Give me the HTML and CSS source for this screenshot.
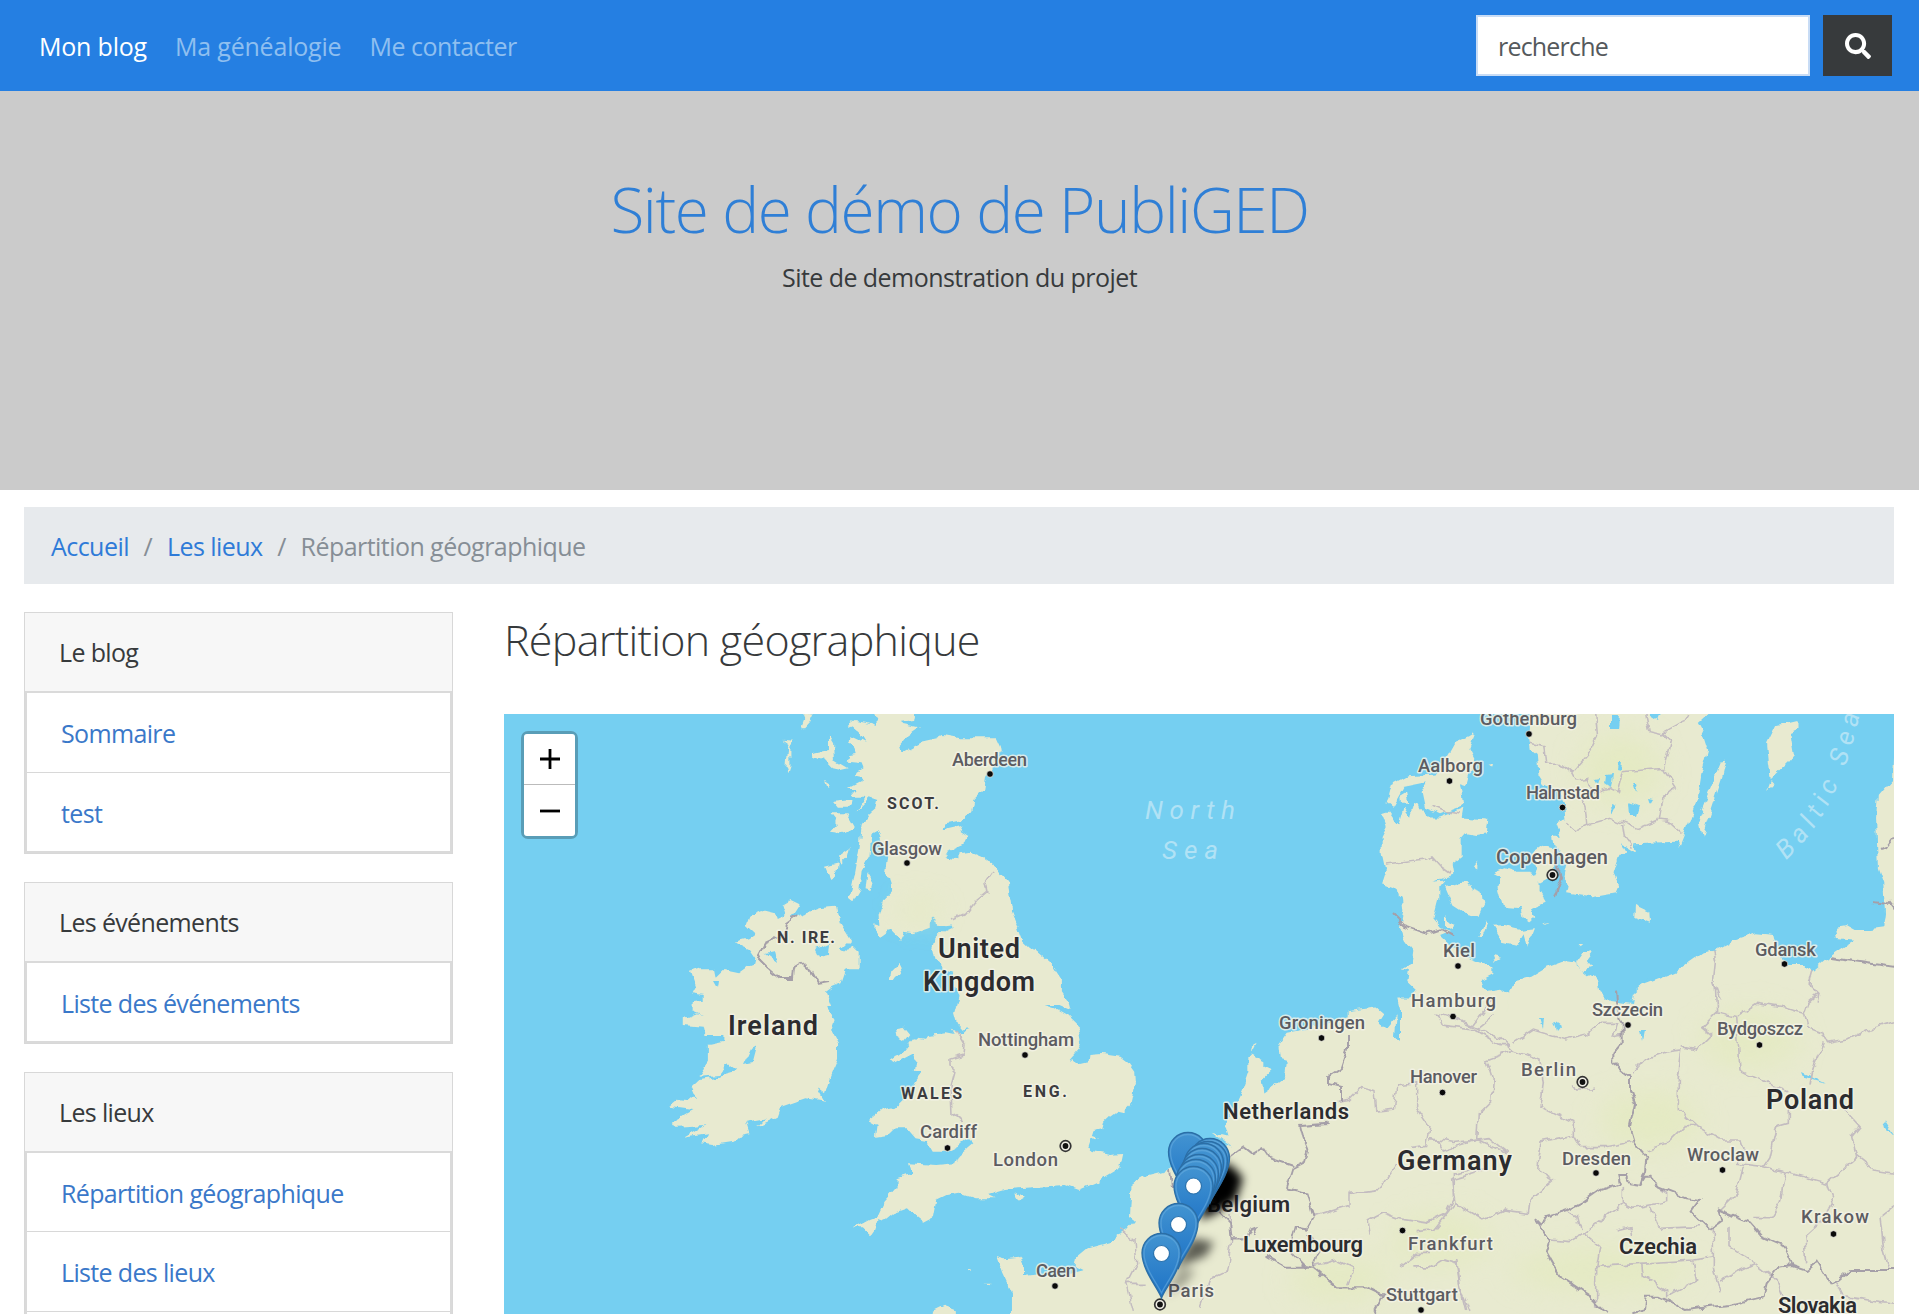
FILE: index.html
```html
<!DOCTYPE html>
<html lang="fr">
<head>
<meta charset="utf-8">
<title>Site de démo de PubliGED</title>
<link rel="stylesheet" href="styles.css">
</head>
<body>
<div class="page">
<nav class="navbar">
  <a class="nav-link active" href="#">Mon blog</a>
  <a class="nav-link" href="#">Ma généalogie</a>
  <a class="nav-link contact" href="#">Me contacter</a>
  <form class="search">
    <input class="search-input" type="text" placeholder="recherche">
    <button class="search-btn" type="button" aria-label="Rechercher">
      <svg viewBox="0 0 512 512" width="26" height="26"><path fill="#fff" d="M505 442.700L405.300 343c-4.500-4.500-10.600-7-17-7H372c27.600-35.300 44-79.700 44-128C416 93.100 322.900 0 208 0S0 93.100 0 208s93.100 208 208 208c48.300 0 92.700-16.400 128-44v16.300c0 6.400 2.500 12.500 7 17l99.700 99.700c9.400 9.400 24.600 9.400 33.900 0l28.300-28.300c9.400-9.400 9.400-24.600.1-34zM208 336c-70.700 0-128-57.200-128-128 0-70.700 57.200-128 128-128 70.700 0 128 57.200 128 128 0 70.700-57.200 128-128 128z"/></svg>
    </button>
  </form>
</nav>
<header class="hero">
  <h1>Site de démo de PubliGED</h1>
  <p>Site de demonstration du projet</p>
</header>
<ol class="breadcrumb">
  <li><a href="#">Accueil</a></li>
  <li class="sep">/</li>
  <li><a href="#">Les lieux</a></li>
  <li class="sep">/</li>
  <li class="current">Répartition géographique</li>
</ol>
<div class="content">
  <aside class="sidebar">
    <section class="card">
      <div class="card-header">Le blog</div>
      <ul><li><a href="#">Sommaire</a></li><li><a href="#">test</a></li></ul>
    </section>
    <section class="card">
      <div class="card-header">Les événements</div>
      <ul><li><a href="#">Liste des événements</a></li></ul>
    </section>
    <section class="card">
      <div class="card-header">Les lieux</div>
      <ul><li><a href="#">Répartition géographique</a></li><li><a href="#">Liste des lieux</a></li><li></li></ul>
    </section>
  </aside>
  <main class="main">
    <h2>Répartition géographique</h2>
    <div class="map">
      <svg class="map-svg" viewBox="504 714 1390 600" width="1390" height="600">
        <defs>
          <filter id="coast" x="0" y="0" width="1" height="1">
            <feTurbulence type="fractalNoise" baseFrequency="0.09" numOctaves="2" seed="4" result="n"/>
            <feDisplacementMap in="SourceGraphic" in2="n" scale="8" xChannelSelector="R" yChannelSelector="G"/>
          </filter>
          <filter id="soft" x="-1" y="-1" width="3" height="3"><feGaussianBlur stdDeviation="5"/></filter>
          <filter id="wide" x="-1" y="-1" width="3" height="3"><feGaussianBlur stdDeviation="14"/></filter>
          <linearGradient id="pinfill" x1="0" y1="0" x2="0" y2="1"><stop offset="0" stop-color="#4394d1"/><stop offset="1" stop-color="#1d72c6"/></linearGradient>
          <g id="pin"><path d="M0 45C-3 36-19.500 17-19.500 0A19.500 19.500 0 0 1 19.500 0C19.500 17 3 36 0 45Z" fill="url(#pinfill)" stroke="#2b6ea6" stroke-width="1.300"/><path d="M0 40C-4 31-17.500 15-17.500 0A17.500 17.500 0 0 1 17.500 0C17.500 15 4 31 0 40Z" fill="none" stroke="#6cafe0" stroke-opacity=".55" stroke-width="1.300"/></g>
          <g id="hole"><circle r="8" fill="#fff" stroke="#2b73ae" stroke-width="1.200"/></g>
          <g id="capital"><circle r="5.300" fill="#f3f1e8" stroke="#333" stroke-width="1.700"/><circle r="2.900" fill="#111"/></g>
        </defs>
        <rect x="504" y="714" width="1390" height="600" fill="#74cff1"/>
        <g filter="url(#coast)">
          <rect x="500" y="710" width="1398" height="608" fill="#74cff1"/>
          <g fill="#e8ead0">
            <!-- Scotland -->
            <g transform="translate(480 600) scale(.39542 .33333)">
              <path d="M985 325L1003 358 1003 375 975 365 950 360 932 375 945 385 960 400 975 428 945 412 932 405 930 430 945 440 950 462 935 465 930 485 965 490 970 505 955 515 950 530 968 535 965 545 925 570 950 570 935 590 975 590 950 635 985 592 1005 600 1000 625 985 640 965 680 960 740 945 840 935 890 945 900 960 870 965 810 985 770 990 700 1005 690 1015 720 1030 765 1023 830 1040 835 1045 870 1020 900 1008 950 1010 975 995 970 995 985 1012 1010 1035 990 1060 1020 1070 995 1095 1000 1140 980 1140 955 1160 975 1195 970 1362 980 1345 930 1335 850 1295 790 1270 770 1240 755 1215 760 1215 775 1175 770 1185 750 1225 730 1235 705 1215 690 1220 675 1165 690 1180 670 1220 660 1245 630 1250 600 1275 570 1280 530 1300 490 1317 455 1315 440 1305 415 1215 415 1170 405 1155 415 1115 425 1070 455 1060 440 1080 410 1110 385 1070 375 1065 365 1100 360 1105 325Z"/>
              <path d="M815 345L840 350 835 365 820 385 812 385 820 360ZM765 422L792 425 785 440 785 500 780 520 775 500 780 435ZM880 405L893 430 895 480 930 505 910 510 890 505 870 480 840 470 840 460 880 450ZM870 540L883 550 877 562ZM885 640L925 640 945 680 915 700 885 695 905 670ZM895 605L940 600 930 620 905 620ZM870 800L905 790 900 830 885 840ZM905 770L935 745 930 770 910 795ZM980 820L995 850 990 870 975 865Z"/>
            </g>
            <!-- England, Wales, Ireland and western France -->
            <g transform="translate(640 880) scale(.3444 .33333)">
              <path d="M1065 5L890 80 905 140 885 150 855 180 848 205 855 240 880 265 910 275 900 290 915 320 925 350 912 400 920 430 935 448 960 445 930 460 905 445 915 465 890 460 830 465 825 480 795 475 760 520 725 545 740 550 795 520 800 540 795 575 815 580 800 600 780 640 740 680 700 690 665 720 690 735 685 770 720 765 740 745 775 745 800 775 830 780 850 815 885 815 925 795 950 775 965 790 925 825 915 850 860 855 780 850 790 880 745 895 745 925 710 965 690 1010 665 1020 620 1045 650 1045 670 1065 680 1050 690 1020 705 1025 735 1000 775 985 790 1000 825 1028 850 1015 860 960 890 945 925 938 975 955 1030 955 1010 945 1060 930 1100 925 1160 920 1235 915 1275 930 1330 905 1355 885 1395 860 1403 822 1365 825 1310 815 1302 800 1310 775 1330 770 1315 765 1320 750 1345 745 1350 725 1365 710 1385 695 1405 700 1425 680 1440 610 1438 575 1420 550 1395 530 1340 522 1305 525 1302 550 1280 555 1255 535 1245 540 1270 510 1282 480 1275 440 1240 405 1205 385 1175 375 1215 375 1250 390 1245 370 1225 340 1225 300 1190 245 1150 210 1130 205 1110 185 1090 130 1080 95Z"/>
              <path d="M725 300L730 275 755 248 763 265 740 300ZM740 445L765 440 785 465 770 485 745 470ZM1090 945L1110 940 1120 950 1100 962Z"/>
              <path d="M85 680L115 655 165 660 150 625 175 600 230 590 285 575 255 550 230 585 170 590 200 545 200 495 245 485 245 465 190 465 185 440 130 435 130 415 165 400 185 405 150 390 150 370 185 365 185 345 150 340 160 320 145 275 175 265 215 265 220 290 240 270 285 280 305 265 330 255 335 235 315 205 275 185 315 175 335 160 310 135 320 105 355 90 395 100 400 120 420 110 410 75 435 60 465 75 440 115 480 100 520 85 570 80 580 130 610 180 580 210 600 215 615 195 635 215 635 265 600 265 585 310 560 320 540 335 555 375 540 380 565 420 555 450 575 490 575 540 555 590 540 640 515 620 540 665 480 655 410 680 400 710 340 740 365 715 305 725 315 760 290 765 270 785 210 795 180 790 195 760 130 770 190 735 105 740 95 725 155 690Z"/>
              <path d="M1035 1128L1060 1135 1105 1130 1115 1160 1115 1185 1160 1180 1190 1195 1285 1170 1265 1160 1270 1130 1300 1105 1370 1085 1410 1060 1450 1040 1450 1320 1080 1320 1080 1240 1055 1185ZM850 1295L880 1280 920 1295 920 1310 850 1310ZM1000 1208L1018 1208 1015 1213ZM955 1166L965 1168 960 1171Z"/>
            </g>
            <!-- Continental coast from the Channel to Jutland -->
            <g transform="translate(1120 700) scale(.33333 .39158)">
              <path d="M-10 1365L20 1355 45 1330 30 1320 35 1235 75 1215 145 1200 240 1150 300 1130 330 1140 275 1105 320 1115 310 1085 340 1045 365 1000 385 950 385 915 395 905 430 920 430 935 455 945 425 970 430 1005 495 965 500 925 480 920 475 880 500 850 560 840 680 810 680 795 770 785 790 800 775 820 800 835 830 805 825 860 840 870 840 790 832 760 870 760 890 740 865 720 870 690 845 685 875 670 880 640 850 605 840 580 850 540 845 500 815 480 780 470 795 430 785 390 785 350 800 325 785 290 805 285 825 310 835 320 850 275 870 300 880 260 900 265 915 300 960 300 1030 275 1025 300 1105 305 1100 340 1070 345 1040 340 1025 355 1025 400 995 420 1000 445 940 465 975 460 955 480 955 510 940 560 960 580 990 590 960 600 1010 640 1050 660 1080 670 1120 680 1120 700 1085 715 1100 745 1140 740 1170 755 1190 715 1240 710 1300 690 1300 1600 -10 1600Z"/>
              <path d="M800 265L815 215 860 195 950 190 985 140 1005 110 1045 95 1062 86 1045 125 1060 150 1040 215 1020 210 1030 270 960 292 915 275 905 235 920 210 850 222 815 275ZM838 245L858 235 865 265 840 265ZM975 475L1040 465 1055 480 1085 490 1090 525 1075 555 1045 550 1000 525ZM1075 605L1098 560 1102 570 1085 605ZM395 900L400 880 410 875ZM975 555L1000 575 995 588 975 575ZM1105 163L1122 160 1120 167ZM1062 425L1072 415 1072 430Z"/>
            </g>
            <!-- Baltic coasts -->
            <g transform="translate(1360 700) scale(.35714 .33333)">
              <path d="M415 880L440 840 480 830 520 805 570 785 600 790 640 825 665 840 670 875 700 885 760 875 780 860 880 820 960 760 990 755 1050 720 1110 700 1160 705 1165 730 1190 795 1250 795 1265 815 1310 775 1350 745 1380 725 1335 720 1330 680 1360 675 1385 690 1430 690 1465 685 1470 640 1465 545 1450 500 1445 350 1450 290 1490 240 1493 160 1520 160 1520 950 415 950Z"/>
              <path d="M478 30L474 120 478 150 495 165 500 225 515 250 550 270 575 320 578 360 550 370 565 410 540 410 545 440 580 480 570 530 585 550 580 580 650 592 715 580 725 555 710 520 725 470 740 450 730 430 770 455 765 430 890 425 895 440 910 400 930 340 945 300 955 230 965 190 975 150 960 100 945 70 985 30Z"/>
              <path d="M375 520L410 505 440 515 470 515 490 530 500 510 480 460 510 437 540 445 545 520 500 545 500 570 520 605 475 625 488 655 475 665 455 650 450 625 400 620 385 560 395 530ZM375 680L400 678 450 690 490 685 470 740 460 700 440 735 400 725ZM770 615L810 635 812 665 768 648ZM1140 130L1165 75 1225 60 1225 90 1205 100 1215 165 1195 190 1150 235 1145 190ZM1150 240L1158 250 1140 270ZM1010 185L1025 182 1015 230 960 410 948 350 990 240ZM605 790L625 760 655 752 635 780 650 800 620 810ZM375 765L395 770 380 780ZM510 670L530 666 520 674ZM612 735L625 735 618 742Z"/>
            </g>
            <rect x="1400" y="1012" width="500" height="310"/>
          </g>
          <!-- Pasture tints -->
          <g fill="#e2eabb" opacity=".6" filter="url(#wide)">
            <ellipse cx="1620" cy="770" rx="42" ry="35"/><ellipse cx="1440" cy="1240" rx="50" ry="26"/><ellipse cx="1650" cy="1120" rx="50" ry="30"/><ellipse cx="1600" cy="1270" rx="90" ry="22"/><ellipse cx="1340" cy="1280" rx="50" ry="22"/><ellipse cx="1750" cy="1040" rx="50" ry="28"/><ellipse cx="920" cy="910" rx="20" ry="10"/>
          </g>
          <!-- Lakes and lagoons -->
          <g fill="#74cff1">
            <path d="M1597 978L1650 978 1634 993 1632 1004 1610 1001 1600 991ZM816 949L830 943 829 955 820 957ZM765 954L775 952 778 964ZM750 1050L757 1046 753 1061 744 1063ZM714 981L719 981 718 988ZM1611 716L1619 716 1618 729 1611 729ZM1606 776L1613 775 1611 788 1605 784ZM1629 803L1640 807 1637 817 1630 815ZM1618 762L1622 762 1621 771 1617 770ZM1633 782L1639 784 1636 792ZM1648 798L1653 799 1650 804ZM1595 779L1600 778 1598 784ZM1611 804L1616 806 1612 815ZM1648 714L1662 714 1659 721ZM1540 1018L1544 1018 1543 1028ZM1553 1021L1560 1026 1556 1031ZM1641 1030L1645 1030 1643 1040ZM1803 1072L1826 1083 1805 1077ZM1884 1119L1895 1136 1886 1127Z"/>
          </g>
          <!-- Regional limits -->
          <g fill="none" stroke="#c3bcc0" stroke-width="1.600">
            <path d="M993 870L985 882 987 892 976 901 966 914 953 920M956 1030L965 1045 964 1054 950 1058 950 1067 955 1072 951 1087 952 1115 962 1122M1386 864L1402 862 1425 859 1432 857 1440 866 1450 873M1432 806L1444 811 1459 814"/>
            <g transform="translate(1120 700) scale(.33333 .39158)" stroke-width="4.400">
              <path d="M650 1025L690 1020 725 990 765 1000 770 1050 820 1045 830 985 890 980 890 1040 930 1090 920 1140 870 1145M930 1120L1000 1130 1110 1120 1160 1155M750 1365L745 1330 790 1310 840 1325 920 1335 980 1310 1000 1270 1000 1210 1050 1200M780 1250L690 1260 690 1290 580 1320M780 1250L830 1190M330 1310L335 1380 320 1460 270 1480 240 1550M0 1350L45 1380 50 1440 20 1490 80 1490M580 1445L650 1430 700 1450 680 1490M20 1490L40 1560M970 1430L1010 1440 1020 1500 1050 1560M880 1450L930 1450 970 1430M1120 760L1060 830 950 800 965 830 1060 840 1140 880 1170 880"/>
            </g>
            <g transform="translate(1360 700) scale(.35714 .33333)" stroke-width="4.400">
              <path d="M660 42L665 110 640 165 595 220 560 190 520 190 515 140 475 130M595 220L605 240 640 235 650 280 700 265 720 275 735 215 850 205 870 120 850 100 900 70 915 42M850 205L885 265 845 300 835 360 780 385 700 355 635 375 600 395 575 370M635 375L630 320 615 280M735 375L740 410 760 440M835 360L870 365 905 400M800 42L810 95 850 105M988 755L995 790 990 840 1010 900M1265 810L1255 850 1285 880 1280 905"/>
            </g>
            <g transform="translate(1400 980) scale(.33333)" stroke-width="4.800">
              <path d="M165 115L230 145 300 170 340 210 260 240 280 300 275 360 235 400 230 480 130 510 115 480 90 480M230 145L280 105M340 190L400 150 500 180 560 165 600 130 650 130 640 165 665 160M340 210L420 240 430 310 420 380 520 430 520 465 420 485 410 570 460 600 390 660 385 700 310 690 250 720 165 670 100 750 50 755M165 670L155 600 260 570M235 480L320 520M520 465L540 500 620 500 700 485M695 280L730 240 800 215 845 210 835 290 835 390 890 440 960 480 1020 480 1030 510 1010 550 1090 560 1110 530 1130 440 1165 430 1165 390M845 200L890 210 935 165 905 140 950 95 945 0M950 95L1010 110 1070 70 1160 85 1210 100 1220 140 1270 160 1285 190 1340 180 1400 150 1482 125M1210 100L1220 70 1255 40 1225 0M1010 110L1020 270 1100 310 1165 335M1270 190L1240 260 1230 320M1335 390L1380 440 1355 470 1370 530 1280 610 1155 575 1090 560M1370 530L1420 570 1482 580M1280 610L1300 670 1280 710 1215 770 1220 850M1155 575L1140 670 1115 710 1060 710M1030 560L1010 640 960 690M740 510L800 490 850 440 890 440M670 620L670 670 700 685 800 665 800 640 760 610M670 670L550 760 600 800 590 860 720 850 880 840 940 830M500 690L530 710 540 750M450 780L510 785 550 760M590 860L590 980M725 850L730 890 800 930 800 955M880 845L890 900 800 950M750 680L780 745 900 740M940 745L940 860 960 940M990 740L990 800 1065 850 1130 900M1065 850L960 900M1440 710L1450 800 1470 870M1445 710L1482 680M650 750L690 740 695 770M1130 900L1150 950M1310 910L1330 950 1482 970M0 860L50 820 90 820M170 840L180 910 200 990M520 310L530 330 580 330 590 320"/>
            </g>
          </g>
          <!-- State borders -->
          <g fill="none" stroke="#a59fa8" stroke-width="2">
            <path d="M797 916L786 924 783 935 766 943 758 958 767 967 780 978 792 978 793 966 801 961 810 969 818 984 829 982M1392 914L1404 926 1427 934 1442 929 1453 935M1555 863L1561 878 1554 898M1347 1036L1347 1050 1341 1068 1329 1076 1329 1083 1341 1086 1341 1101M1880 850L1887 847 1898 833M1873 902L1887 904 1890 901 1897 910M1830 958L1896 967"/>
            <g transform="translate(1120 700) scale(.33333 .39158)" stroke-width="5.400">
              <path d="M620 1080L540 1085 550 1120 565 1150 555 1180 520 1195 500 1250 560 1260 580 1320 560 1350 530 1345 510 1410 550 1445 580 1450 600 1400 560 1360M330 1165L370 1140 400 1160 430 1145 450 1170 520 1190M150 1200L155 1240 200 1250M290 1300L330 1335 335 1375 385 1375M385 1370L395 1350 410 1345 400 1370M440 1420L500 1450 580 1450 650 1500 740 1500 790 1520 760 1568"/>
            </g>
            <g transform="translate(1400 980) scale(.33333)" stroke-width="6">
              <path d="M645 35L650 85 665 130 665 190 640 220 640 250 690 290 690 330 705 370 690 440 705 490 740 530 735 570 720 615 690 610 680 585 655 585 660 610 600 630 550 665 500 690 440 710 425 735 405 715 450 785 440 820 480 890 570 950 620 1000M720 615L735 590 755 590 770 620 860 655 900 660 875 695 930 750 965 725 955 690 1050 730 1080 765 1150 795 1175 855 1220 870 1250 845 1290 910 1310 905 1350 870 1482 870M1175 855L1140 860 1100 910 1090 950 990 975 930 980 860 990 780 950 740 950 735 990 700 1000"/>
            </g>
          </g>
        </g>
        <g class="town">
          <text x="952" y="766" textLength="75">Aberdeen</text><text x="872" y="855" textLength="70">Glasgow</text><text x="978" y="1046" textLength="96">Nottingham</text><text x="920" y="1138" textLength="57">Cardiff</text><text x="993" y="1166" textLength="65">London</text><text x="1036" y="1277" textLength="40">Caen</text><text x="1480" y="725" textLength="97">Gothenburg</text><text x="1418" y="772" textLength="65">Aalborg</text><text x="1526" y="799" textLength="74">Halmstad</text><text class="big" x="1496" y="864" textLength="112">Copenhagen</text><text x="1443" y="957" textLength="32">Kiel</text><text x="1755" y="956" textLength="61">Gdansk</text><text x="1411" y="1007" textLength="85">Hamburg</text><text x="1592" y="1016" textLength="71">Szczecin</text><text x="1717" y="1035" textLength="86">Bydgoszcz</text><text x="1521" y="1076" textLength="55">Berlin</text><text x="1410" y="1083" textLength="67">Hanover</text><text x="1562" y="1165" textLength="69">Dresden</text><text x="1687" y="1161" textLength="72">Wroclaw</text><text x="1801" y="1223" textLength="68">Krakow</text><text x="1408" y="1250" textLength="85">Frankfurt</text><text x="1386" y="1301" textLength="72">Stuttgart</text><text x="1279" y="1029" textLength="86">Groningen</text><text x="1168" y="1297" textLength="46">Paris</text>
        </g>
        <g class="region">
          <text x="887" y="809" textLength="52">SCOT.</text><text x="777" y="943" textLength="58">N. IRE.</text><text x="901" y="1099" textLength="61">WALES</text><text x="1023" y="1097" textLength="44">ENG.</text>
        </g>
        <g class="country">
          <text x="938" y="958" textLength="82">United</text><text x="923" y="991" textLength="112">Kingdom</text><text x="728" y="1035" textLength="90">Ireland</text><text x="1766" y="1109" textLength="88">Poland</text><text x="1397" y="1170" textLength="115">Germany</text>
          <g class="small"><text x="1223" y="1119" textLength="126">Netherlands</text><text x="1207" y="1212" textLength="83">Belgium</text><text x="1243" y="1252" textLength="120">Luxembourg</text><text x="1619" y="1254" textLength="78">Czechia</text><text x="1778" y="1313" textLength="79">Slovakia</text></g>
        </g>
        <g class="water">
          <text x="1145" y="819" textLength="90">North</text><text x="1162" y="859" textLength="56">Sea</text>
          <path id="baltic" d="M1786 860Q1846 806 1864 690" fill="none"/>
          <text><textPath href="#baltic" textLength="166">Baltic Sea</textPath></text>
        </g>
        <g class="dots">
          <circle cx="990" cy="774" r="3.300"/><circle cx="907" cy="863" r="3.300"/><circle cx="1025" cy="1055" r="3.300"/><circle cx="947.500" cy="1148" r="3.300"/><circle cx="1055" cy="1286" r="3.300"/><circle cx="1529" cy="734" r="3.300"/><circle cx="1449.500" cy="781" r="3.300"/><circle cx="1562.500" cy="807.500" r="3.300"/><circle cx="1458" cy="966" r="3.300"/><circle cx="1784.500" cy="964" r="3.300"/><circle cx="1453" cy="1016.500" r="3.300"/><circle cx="1628" cy="1025" r="3.300"/><circle cx="1759.500" cy="1045" r="3.300"/><circle cx="1442.500" cy="1092.500" r="3.300"/><circle cx="1596" cy="1173" r="3.300"/><circle cx="1722.500" cy="1170" r="3.300"/><circle cx="1833.500" cy="1234" r="3.300"/><circle cx="1402.500" cy="1230.500" r="3.300"/><circle cx="1421" cy="1310" r="3.300"/><circle cx="1321.500" cy="1038" r="3.300"/>
        </g>
        <use href="#capital" x="1065.500" y="1146"/><use href="#capital" x="1552.500" y="875"/><use href="#capital" x="1582.500" y="1082"/><use href="#capital" x="1160" y="1304.500"/>
        <g filter="url(#soft)"><path d="M1200 1220L1214 1160 1232 1166 1243 1178 1236 1200 1214 1214Z" fill="#000"/><path d="M1175 1268L1192 1238 1214 1242 1206 1256Z" fill="#000" opacity=".6"/><path d="M1164 1296L1180 1268 1196 1270 1186 1284Z" fill="#000" opacity=".3"/></g>
        <use href="#pin" x="1188" y="1152"/><use href="#pin" x="1210" y="1158"/><use href="#pin" x="1208" y="1161"/><use href="#pin" x="1204" y="1163"/><use href="#pin" x="1202" y="1168"/><use href="#pin" x="1199" y="1174"/><use href="#pin" x="1196" y="1179"/><use href="#pin" x="1193.500" y="1186"/><use href="#hole" x="1193.500" y="1186"/>
        <use href="#pin" x="1178.500" y="1223"/><use href="#hole" x="1178.500" y="1224.500"/>
        <use href="#pin" x="1161.500" y="1253"/><use href="#hole" x="1161.500" y="1253.500"/>
      </svg>
      <div class="zoom"><button type="button" aria-label="Zoom avant"><svg width="20" height="20" viewBox="0 0 20 20"><path d="M10 0V20M0 10H20" stroke="#000" stroke-width="2.800"/></svg></button><button type="button" aria-label="Zoom arrière"><svg width="20" height="20" viewBox="0 0 20 20"><path d="M0 10H20" stroke="#000" stroke-width="2.800"/></svg></button></div>
    </div>
  </main>
</div>
</div>
</body>
</html>
```
FILE: styles.css
```css
* { box-sizing: border-box; }
html { background: #fff; }
body {
  margin: 0;
  height: 1314px;
  overflow: hidden;
  font-family: "Open Sans", "Noto Sans", sans-serif;
  font-size: 25px;
  line-height: 38px;
  letter-spacing: -0.55px;
  color: #373a3c;
}
.page { width: 1919px; height: 1314px; overflow: hidden; }
a { color: #3a78c9; text-decoration: none; }

.navbar {
  display: flex;
  align-items: center;
  height: 91px;
  padding: 0 27px 0 39px;
  background: #257fe2;
}
.nav-link { color: #8fbff0; margin-right: 28px; padding-top: 1px; letter-spacing: -0.2px; }
.nav-link.active { color: #fff; }
.nav-link.contact { letter-spacing: -0.5px; }
.search { display: flex; gap: 13px; margin-left: auto; }
.search-input {
  width: 334px;
  height: 61px;
  padding: 0 20px;
  border: 2px solid #c8dcf5;
  background: #fff;
  font: inherit;
  letter-spacing: -0.9px;
}
.search-input::placeholder { color: #55595c; opacity: 1; }
.search-input, .search-input::placeholder { letter-spacing: -0.8px; }
.search-btn {
  display: flex;
  align-items: center;
  justify-content: center;
  width: 69px;
  height: 61px;
  padding: 0;
  border: 0;
  background: #373a3c;
}

.hero {
  height: 399px;
  padding-top: 76px;
  background: #cbcbcb;
  text-align: center;
}
.hero h1 {
  margin: 0;
  font-size: 62px;
  font-weight: 300;
  line-height: 84px;
  letter-spacing: -1.4px;
  color: #2f7fd6;
}
.hero p { margin: 7px 0 0; }

.breadcrumb {
  display: flex;
  align-items: center;
  height: 77px;
  margin: 17px 25px 28px 24px;
  padding: 0 27px;
  list-style: none;
  background: #e7eaed;
}
.breadcrumb .sep { width: 38px; text-align: center; color: #868e96; }
.breadcrumb .current { color: #868e96; }
.breadcrumb a { color: #2f7bd8; }

.content { display: flex; gap: 51px; padding: 0 25px 0 24px; }
.sidebar { width: 429px; letter-spacing: -0.65px; }
.card { margin-bottom: 27.5px; border: 1px solid #d8d8d8; }
.card-header {
  height: 78px;
  padding: 20px 34px 0;
  background: #f7f7f7;
}
.card ul {
  margin: 0;
  padding: 0;
  list-style: none;
  border: 2px solid #dadada;
}
.card li { height: 79.5px; padding: 21px 34px 0; border-bottom: 1px solid #d8d8d8; }
.card li:last-child { height: 78.5px; border-bottom: 0; }

.main { flex: 1; }
.main h2 {
  height: 102px;
  margin: 0;
  font-size: 43px;
  font-weight: 300;
  line-height: 56px;
  letter-spacing: -0.7px;
}
.map { position: relative; height: 600px; overflow: hidden; }
.map-svg { display: block; font-family: Roboto, "Open Sans", sans-serif; letter-spacing: 0; }
.map-svg text { paint-order: stroke; stroke: rgba(244, 243, 232, .8); stroke-width: 3px; stroke-linejoin: round; }
.town { font-size: 18.5px; font-weight: 500; fill: #5c5c61; }
.town .big { font-size: 20px; }
.region { font-size: 16px; font-weight: 700; fill: #3c3c3f; }
.country { font-size: 27px; font-weight: 600; fill: #2c2c2f; }
.country .small { font-size: 22px; }
.map-svg .water text { stroke: none; }
.water { font-size: 26px; font-style: italic; fill: #b1e2f5; }
.dots { fill: #0a0a0a; stroke: rgba(245, 243, 235, .7); stroke-width: 1px; }

.zoom {
  position: absolute;
  top: 17px;
  left: 17px;
  border: 3px solid rgba(0, 0, 0, .24);
  border-radius: 7px;
  background-clip: padding-box;
}
.zoom button {
  display: flex;
  align-items: center;
  justify-content: center;
  width: 51px;
  height: 51px;
  padding: 0;
  border: 0;
  background: #fff;
  border-radius: 0 0 3px 3px;
}
.zoom button:first-child { border-bottom: 1px solid #bbb; border-radius: 3px 3px 0 0; }
```
